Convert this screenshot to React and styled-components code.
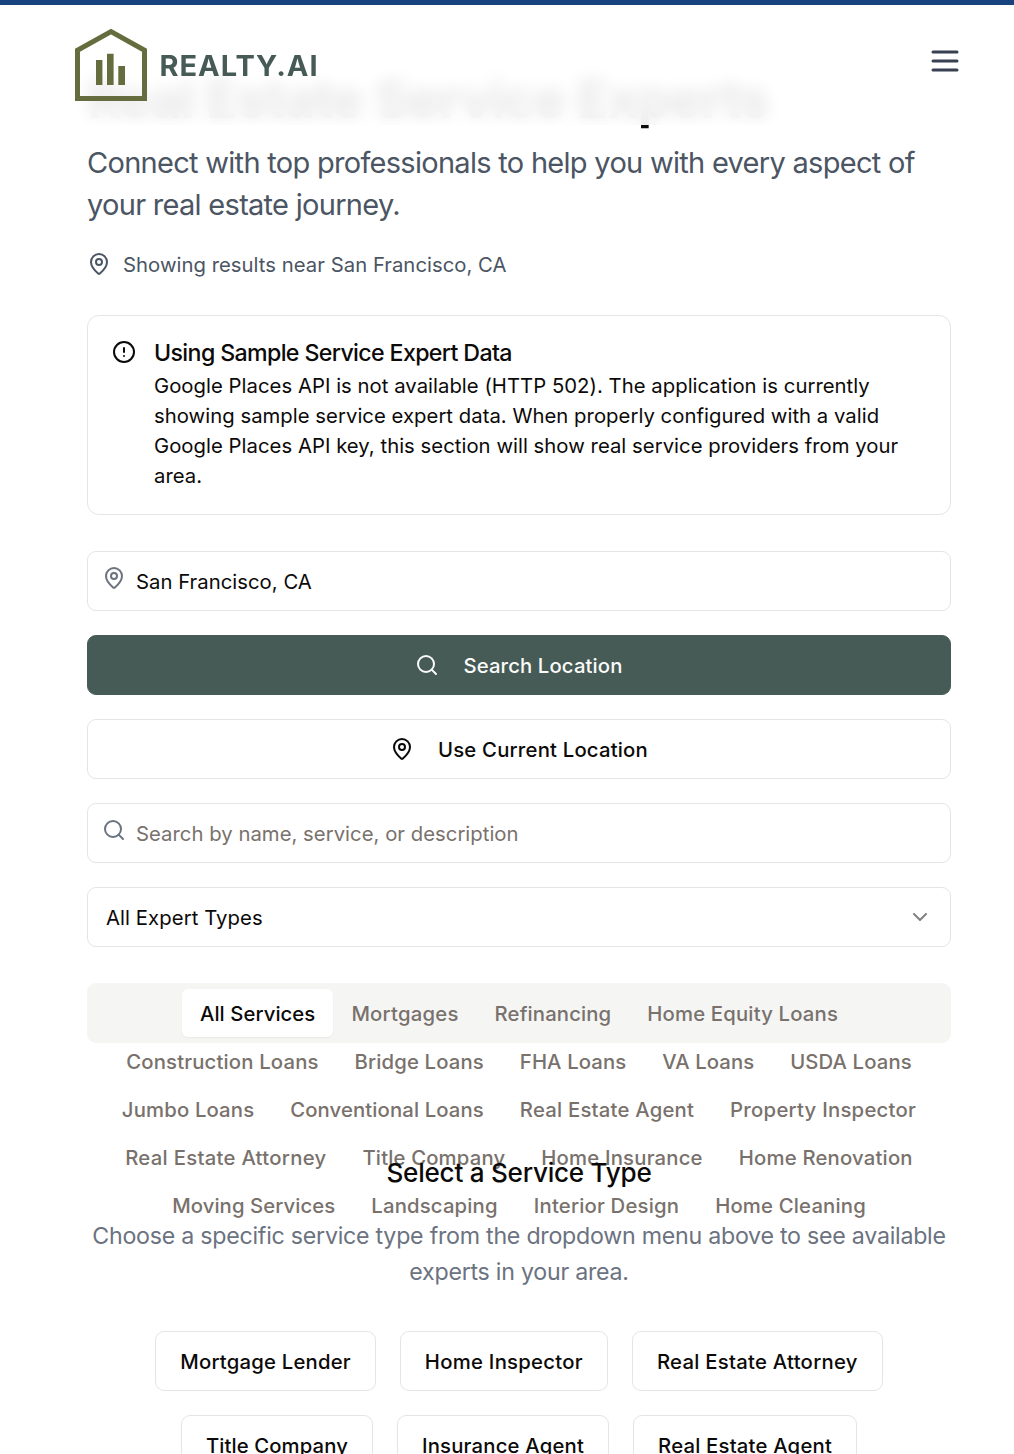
import React from "react";
import styled, { createGlobalStyle } from "styled-components";
import { MapPin, Search, CircleAlert, ChevronDown } from "lucide-react";

const GlobalStyle = createGlobalStyle`
  *, *::before, *::after { box-sizing: border-box; }
  body {
    margin: 0;
    background: #fff;
    color: #0c0a09;
    font-family: Inter, "Liberation Sans", sans-serif;
    font-size: 20.3px;
    line-height: 30px;
    letter-spacing: 0.03px;
  }
  h1, h2, h3, p { margin: 0; }
  button, input { font: inherit; letter-spacing: inherit; color: inherit; }
  svg { flex-shrink: 0; display: block; }
`;

const Page = styled.div`
  height: 1454px;
  overflow: hidden;
`;

const Header = styled.header`
  position: fixed;
  top: 0;
  left: 0;
  right: 0;
  z-index: 10;
  height: 125px;
  padding: 0 51px 0 75px;
  display: flex;
  align-items: flex-start;
  justify-content: space-between;
  border-top: 5px solid #17427d;
  background: rgba(255, 255, 255, 0.9);
  backdrop-filter: blur(8px);
`;

const Brand = styled.div`
  display: flex;
  align-items: center;
  gap: 12px;
  margin-top: 23px;
`;

const BrandName = styled.span`
  padding: 2px 0 0 0.5px;
  font-size: 29px;
  line-height: 36px;
  font-weight: 700;
  letter-spacing: 0.95px;
  color: #465a56;
`;

const MenuButton = styled.button`
  margin-top: 38px;
  padding: 0;
  border: 0;
  background: none;
  color: #374151;
`;

const Main = styled.main`
  width: 864px;
  margin-left: 87px;
  padding-top: 69px;
  display: flex;
  flex-direction: column;
`;

const Title = styled.h1`
  font-size: 52.4px;
  line-height: 60px;
  font-weight: 700;
  letter-spacing: -0.68px;
  white-space: nowrap;
`;

const Subtitle = styled.p`
  margin-top: 13px;
  font-size: 29px;
  line-height: 42px;
  letter-spacing: -0.71px;
  color: #4b5563;
`;

const Nearby = styled.div`
  display: flex;
  align-items: center;
  gap: 12px;
  height: 30px;
  margin: 23px 0 36px;
  color: #4b5563;
`;

const Label = styled.span`
  padding-top: 2px;
`;

const Alert = styled.section`
  display: flex;
  gap: 18px;
  height: 200px;
  padding: 24px;
  border: 1px solid #e5e5e5;
  border-radius: 12px;
`;

const AlertBody = styled.div`
  padding-top: 1px;
`;

const AlertTitle = styled.h2`
  margin-bottom: 6px;
  font-size: 23.2px;
  line-height: 24px;
  font-weight: 500;
  letter-spacing: -0.64px;
`;

const AlertText = styled.p`
  letter-spacing: 0.035px;
  white-space: nowrap;
`;

const Controls = styled.div`
  display: grid;
  grid-auto-rows: 60px;
  gap: 24px;
  margin: 36px 0;
`;

const Field = styled.label`
  display: flex;
  gap: 10px;
  padding: 0 14px;
  border: 1px solid #e5e5e5;
  border-radius: 9px;
  svg { margin-top: 14px; color: #6b7280; }
`;

const Input = styled.input`
  flex: 1;
  min-width: 0;
  padding: 2px 0 0;
  border: 0;
  outline: 0;
  background: none;
  &::placeholder { color: #78716c; opacity: 1; }
`;

const Button = styled.button`
  display: flex;
  align-items: center;
  justify-content: center;
  gap: 24px;
  height: 60px;
  padding: 0 24px;
  border: 1px solid ${(p) => (p.$primary ? "#465a56" : "#e5e5e5")};
  border-radius: 9px;
  background: ${(p) => (p.$primary ? "#465a56" : "#fff")};
  color: ${(p) => (p.$primary ? "#fafaf9" : "#0c0a09")};
  font-weight: 500;
  letter-spacing: ${(p) => p.$tracking ?? 0.2}px;
  white-space: nowrap;
`;

const Select = styled.button`
  display: flex;
  align-items: center;
  justify-content: space-between;
  padding: 0 18px;
  border: 1px solid #e5e5e5;
  border-radius: 9px;
  background: #fff;
  letter-spacing: 0.08px;
  svg { opacity: 0.5; }
`;

const Tabs = styled.div`
  display: flex;
  flex-wrap: wrap;
  justify-content: center;
  height: 60px;
  padding: 6px;
  border-radius: 9px;
  background: #f5f5f4;
`;

const Tab = styled.button`
  height: 48px;
  padding: 2px 18px 0;
  border: 0;
  border-radius: 6px;
  background: ${(p) => (p.$active ? "#fff" : "transparent")};
  color: ${(p) => (p.$active ? "#0c0a09" : "#78716c")};
  box-shadow: ${(p) => (p.$active ? "0 1px 2px rgba(0, 0, 0, 0.05)" : "none")};
  font-weight: 500;
  letter-spacing: ${(p) => p.$tracking}px;
  white-space: nowrap;
`;

const Prompt = styled.section`
  position: relative;
  margin-top: 109px;
  text-align: center;
`;

const PromptTitle = styled.h3`
  font-size: 26.1px;
  line-height: 42px;
  font-weight: 500;
  letter-spacing: -0.25px;
`;

const PromptText = styled.p`
  margin: 24px 0 41px;
  font-size: 23.2px;
  line-height: 36px;
  letter-spacing: -0.25px;
  white-space: nowrap;
  color: #6b7280;
`;

const Choices = styled.div`
  display: flex;
  flex-wrap: wrap;
  justify-content: center;
  gap: 24px;
  padding: 0 36px;
`;

const tabs = [
  ["All Services", 0.08],
  ["Mortgages", 0.23],
  ["Refinancing", 0.14],
  ["Home Equity Loans", 0.18],
  ["Construction Loans", 0.17],
  ["Bridge Loans", 0.14],
  ["FHA Loans", 0.12],
  ["VA Loans", 0.08],
  ["USDA Loans", 0.12],
  ["Jumbo Loans", 0.16],
  ["Conventional Loans", 0.12],
  ["Real Estate Agent", 0.22],
  ["Property Inspector", 0.26],
  ["Real Estate Attorney", 0.29],
  ["Title Company", 0.17],
  ["Home Insurance", 0.2],
  ["Home Renovation", 0.2],
  ["Moving Services", 0.09],
  ["Landscaping", 0.18],
  ["Interior Design", 0.2],
  ["Home Cleaning", 0.18],
];

const choices = [
  ["Mortgage Lender", 0.2],
  ["Home Inspector", 0.27],
  ["Real Estate Attorney", 0.27],
  ["Title Company", 0.1],
  ["Insurance Agent", 0.2],
  ["Real Estate Agent", 0.2],
];

function Logo() {
  return (
    <svg width="72" height="73" viewBox="0 0 72 73" fill="none">
      <path d="M2.5 70.5V22.2L36 3.6l33.5 18.6v48.3z" stroke="#656d3e" strokeWidth="5" />
      <path d="M21 32h6.4v25H21zM32 25.7h6.6V57H32zM43.3 38H50v19h-6.7z" fill="#656d3e" />
    </svg>
  );
}

export default function App() {
  return (
    <Page>
      <GlobalStyle />
      <Header>
        <Brand>
          <Logo />
          <BrandName>REALTY.AI</BrandName>
        </Brand>
        <MenuButton aria-label="Menu">
          <svg width="36" height="36" viewBox="0 0 24 24" fill="none" stroke="currentColor" strokeWidth="2" strokeLinecap="round">
            <path d="M4 6h16M4 12h16M4 18h16" />
          </svg>
        </MenuButton>
      </Header>
      <Main>
        <Title>Real Estate Service Experts</Title>
        <Subtitle>
          Connect with top professionals to help you with every aspect of<br />
          your real estate journey.
        </Subtitle>
        <Nearby>
          <MapPin size={24} />
          <Label>Showing results near San Francisco, CA</Label>
        </Nearby>
        <Alert>
          <CircleAlert size={24} />
          <AlertBody>
            <AlertTitle>Using Sample Service Expert Data</AlertTitle>
            <AlertText>
              Google Places API is not available (HTTP 502). The application is currently<br />
              showing sample service expert data. When properly configured with a valid<br />
              Google Places API key, this section will show real service providers from your<br />
              area.
            </AlertText>
          </AlertBody>
        </Alert>
        <Controls>
          <Field>
            <MapPin size={24} />
            <Input defaultValue="San Francisco, CA" />
          </Field>
          <Button $primary $tracking={0.14}>
            <Search size={24} />
            <Label>Search Location</Label>
          </Button>
          <Button>
            <MapPin size={24} />
            <Label>Use Current Location</Label>
          </Button>
          <Field>
            <Search size={24} />
            <Input placeholder="Search by name, service, or description" />
          </Field>
          <Select>
            <Label>All Expert Types</Label>
            <ChevronDown size={24} />
          </Select>
        </Controls>
        <Tabs>
          {tabs.map(([label, tracking], i) => (
            <Tab key={label} $active={i === 0} $tracking={tracking}>{label}</Tab>
          ))}
        </Tabs>
        <Prompt>
          <PromptTitle>Select a Service Type</PromptTitle>
          <PromptText>
            Choose a specific service type from the dropdown menu above to see available<br />
            experts in your area.
          </PromptText>
          <Choices>
            {choices.map(([label, tracking]) => (
              <Button key={label} $tracking={tracking}>
                <Label>{label}</Label>
              </Button>
            ))}
          </Choices>
        </Prompt>
      </Main>
    </Page>
  );
}
